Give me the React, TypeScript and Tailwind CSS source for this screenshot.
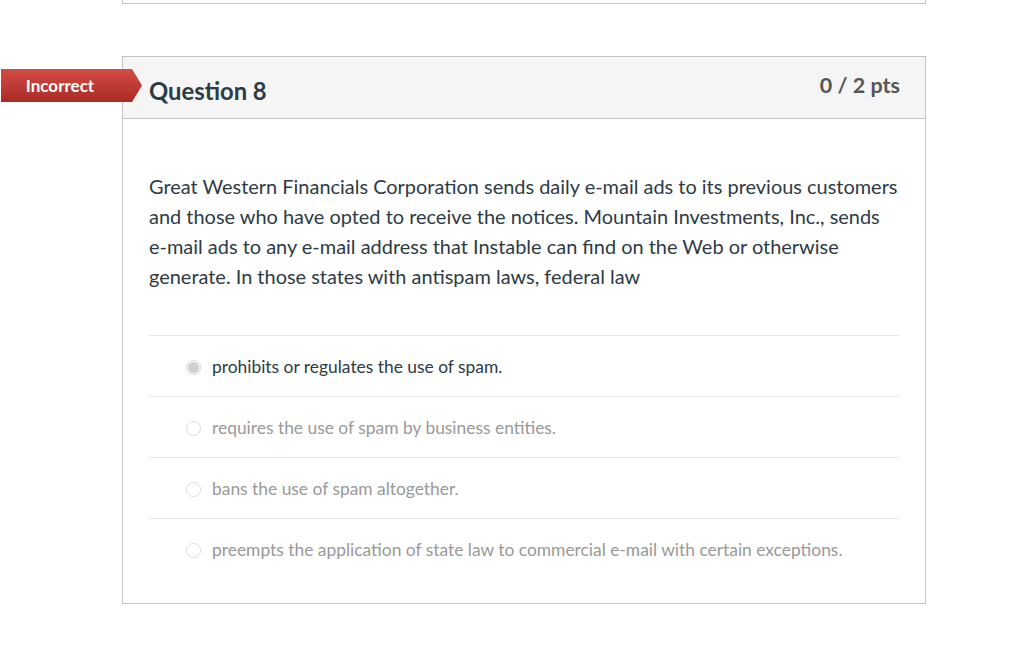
const answers = [
  { text: "prohibits or regulates the use of spam.", selected: true },
  { text: "requires the use of spam by business entities.", selected: false },
  { text: "bans the use of spam altogether.", selected: false },
  { text: "preempts the application of state law to commercial e-mail with certain exceptions.", selected: false },
];

const Radio = ({ selected }: { selected: boolean }) =>
  selected ? (
    <span className="w-[15px] h-[15px] rounded-full border border-[#d4d4d4] bg-white flex items-center justify-center shrink-0">
      <span className="w-[11px] h-[11px] rounded-full bg-[#cfcfcf]" />
    </span>
  ) : (
    <span className="w-[15px] h-[15px] rounded-full border border-[#dcdcdc] bg-white shrink-0" />
  );

export default function App() {
  return (
    <div className="w-[1024px] h-[646px] bg-white overflow-hidden font-['Lato','Open_Sans',sans-serif] text-[#2d3b45]">
      {/* previous question's bottom edge */}
      <div className="ml-[122px] w-[804px] h-[4px] border-x border-b border-[#c4c4c4]" />

      {/* Question card */}
      <div className="relative ml-[122px] mt-[52px] w-[804px] border border-[#c4c4c4]">
        <div className="absolute left-[-122px] top-[12px] w-[141px] h-[33px] bg-gradient-to-b from-[#d44c45] to-[#a92a26] [clip-path:polygon(0_0,131px_0,141px_50%,131px_100%,0_100%)] flex items-center">
          <span className="w-[118px] text-center text-white text-[17px] font-bold leading-none">Incorrect</span>
        </div>

        <div className="h-[62px] bg-[#f5f5f5] border-b border-[#c4c4c4] flex justify-between pl-[26px] pr-[25px]">
          <h2 className="pt-[19px] text-[23.8px] leading-[30px] font-bold text-[#2d3b45]">Question 8</h2>
          <span className="pt-[15px] text-[21.5px] leading-[26px] font-bold text-[#555]">0 / 2 pts</span>
        </div>

        <div className="px-[26px] pt-[52px] pb-[24px]">
          <p className="text-[19.95px] leading-[30px]">
            Great Western Financials Corporation sends daily e-mail ads to its previous customers and those who have opted to receive the notices. Mountain Investments, Inc., sends e-mail ads to any e-mail address that Instable can find on the Web or otherwise generate. In those states with antispam laws, federal law
          </p>

          <div className="mt-[44px]">
            {answers.map((a) => (
              <div
                key={a.text}
                className="h-[61px] border-t border-[#e6e6e6] flex items-center gap-[11px] pl-[37px] pt-[2px]"
              >
                <Radio selected={a.selected} />
                <span className={`text-[17.4px] ${a.selected ? "text-[#2d3b45]" : "text-[#999]"}`}>{a.text}</span>
              </div>
            ))}
          </div>
        </div>
      </div>
    </div>
  );
}
